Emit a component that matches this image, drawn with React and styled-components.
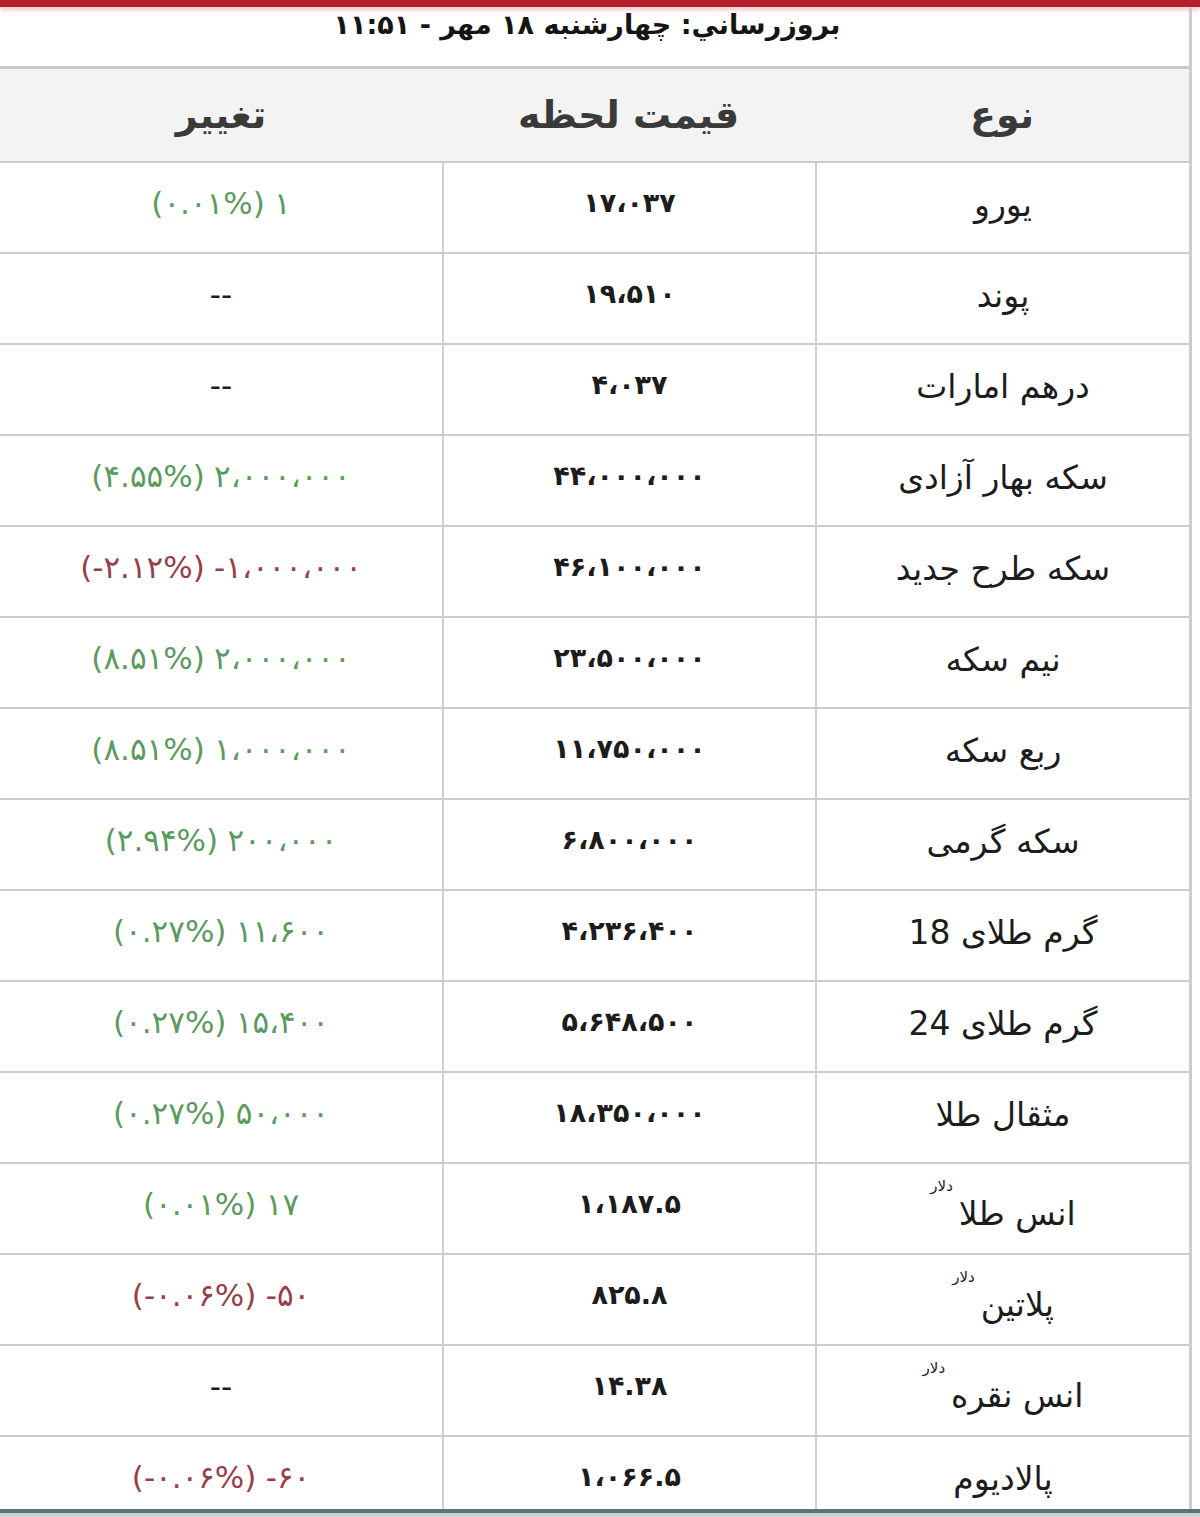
import React from 'react'
import styled, { createGlobalStyle } from 'styled-components'

const GlobalStyle = createGlobalStyle`
  html, body {
    margin: 0;
    padding: 0;
    background: #fff;
  }
  body {
    font-family: "DejaVu Sans", sans-serif;
    color: #1e1e1e;
  }
`

const Page = styled.div`
  width: 1200px;
  height: 1517px;
  display: flex;
  flex-direction: column;
  overflow: hidden;
  direction: rtl;
  background: #fff;
`

const TopBar = styled.div`
  height: 7px;
  flex: none;
  background: #b3202b;
  box-shadow: 0 3px 5px rgba(214, 80, 100, 0.35);
`

const Board = styled.div`
  flex: 1;
  min-height: 0;
  display: flex;
  flex-direction: column;
  margin-right: 8px;
  border-right: 3px solid #cdcdcd;
`

const Updated = styled.div`
  flex: none;
  height: 57px;
  display: flex;
  align-items: flex-start;
  justify-content: center;
  padding: 2px 15px 0 0;
  font-size: 27px;
  font-weight: 700;
  color: #151515;
  line-height: 32px;
  border-bottom: 3px solid #cacaca;
`

const Body = styled.div`
  flex: 1;
  min-height: 0;
  overflow: hidden;
`

const Row = styled.div`
  display: grid;
  grid-template-columns: 374px 373px 442px;
  height: ${p => (p.$head ? '92px' : '89px')};
  background: ${p => (p.$head ? '#f3f3f3' : '#fff')};
  border-bottom: 2px solid #cccccc;
`

const Cell = styled.div`
  display: flex;
  align-items: center;
  justify-content: center;
  gap: 0.3em;
  border-left: ${p => (p.$last || p.$head ? 'none' : '2px solid #d0d0d0')};
  font-size: ${p => (p.$head ? '38px' : p.$kind === 'name' ? '33px' : p.$kind === 'change' ? '31px' : '27px')};
  font-weight: ${p => (p.$head || p.$kind === 'price' ? 700 : 400)};
  letter-spacing: ${p => (p.$kind === 'price' ? '-1px' : 'normal')};
  color: ${p => (p.$head ? '#3a3a3a' : p.$tone === 'up' ? '#5a9a5c' : p.$tone === 'down' ? '#9a3d4a' : '#1c1c1c')};
  padding-bottom: ${p => (p.$head ? '0' : p.$kind === 'name' ? '6px' : '10px')};
  white-space: nowrap;
`

const Name = styled.span`
  display: inline-block;
`

const Num = styled.span`
  direction: ltr;
  unicode-bidi: isolate;
`

const Unit = styled.sup`
  display: inline-block;
  font-size: 15px;
  line-height: 1;
  vertical-align: 34px;
  margin-right: 6px;
  color: #222;
`

const Footer = styled.div`
  flex: none;
  height: 8px;
  background: linear-gradient(#5d7573 0 4px, #c9d3d2 4px);
`

const rows = [
  { name: 'یورو', price: '۱۷،۰۳۷', amount: '۱', pct: '۰.۰۱%', tone: 'up' },
  { name: 'پوند', price: '۱۹،۵۱۰' },
  { name: 'درهم امارات', price: '۴،۰۳۷' },
  { name: 'سکه بهار آزادی', price: '۴۴،۰۰۰،۰۰۰', amount: '۲،۰۰۰،۰۰۰', pct: '۴.۵۵%', tone: 'up' },
  { name: 'سکه طرح جدید', price: '۴۶،۱۰۰،۰۰۰', amount: '-۱،۰۰۰،۰۰۰', pct: '-۲.۱۲%', tone: 'down' },
  { name: 'نیم سکه', price: '۲۳،۵۰۰،۰۰۰', amount: '۲،۰۰۰،۰۰۰', pct: '۸.۵۱%', tone: 'up' },
  { name: 'ربع سکه', price: '۱۱،۷۵۰،۰۰۰', amount: '۱،۰۰۰،۰۰۰', pct: '۸.۵۱%', tone: 'up' },
  { name: 'سکه گرمی', price: '۶،۸۰۰،۰۰۰', amount: '۲۰۰،۰۰۰', pct: '۲.۹۴%', tone: 'up' },
  { name: 'گرم طلای 18', price: '۴،۲۳۶،۴۰۰', amount: '۱۱،۶۰۰', pct: '۰.۲۷%', tone: 'up' },
  { name: 'گرم طلای 24', price: '۵،۶۴۸،۵۰۰', amount: '۱۵،۴۰۰', pct: '۰.۲۷%', tone: 'up' },
  { name: 'مثقال طلا', price: '۱۸،۳۵۰،۰۰۰', amount: '۵۰،۰۰۰', pct: '۰.۲۷%', tone: 'up' },
  { name: 'انس طلا', unit: true, price: '۱،۱۸۷.۵', amount: '۱۷', pct: '۰.۰۱%', tone: 'up' },
  { name: 'پلاتین', unit: true, price: '۸۲۵.۸', amount: '-۵۰', pct: '-۰.۰۶%', tone: 'down' },
  { name: 'انس نقره', unit: true, price: '۱۴.۳۸' },
  { name: 'پالادیوم', price: '۱،۰۶۶.۵', amount: '-۶۰', pct: '-۰.۰۶%', tone: 'down' },
]

const Change = ({ amount, pct }) => {
  if (!amount) return <Num>--</Num>
  return (
    <>
      <Num>{amount}</Num>
      <span>(<Num>{pct}</Num>)</span>
    </>
  )
}

export default function App() {
  return (
    <Page>
      <GlobalStyle />
      <TopBar />
      <Board>
        <Updated>بروزرساني: چهارشنبه ۱۸ مهر - ۱۱:۵۱</Updated>
        <Row $head>
          <Cell $head>نوع</Cell>
          <Cell $head>قیمت لحظه</Cell>
          <Cell $head $last>تغییر</Cell>
        </Row>
        <Body>
          {rows.map(r => (
            <Row key={r.name}>
              <Cell $kind="name">
                <Name>
                  {r.name}
                  {r.unit && <Unit>دلار</Unit>}
                </Name>
              </Cell>
              <Cell $kind="price">
                <Num>{r.price}</Num>
              </Cell>
              <Cell $last $kind="change" $tone={r.tone}>
                <Change amount={r.amount} pct={r.pct} />
              </Cell>
            </Row>
          ))}
        </Body>
      </Board>
      <Footer />
    </Page>
  )
}
